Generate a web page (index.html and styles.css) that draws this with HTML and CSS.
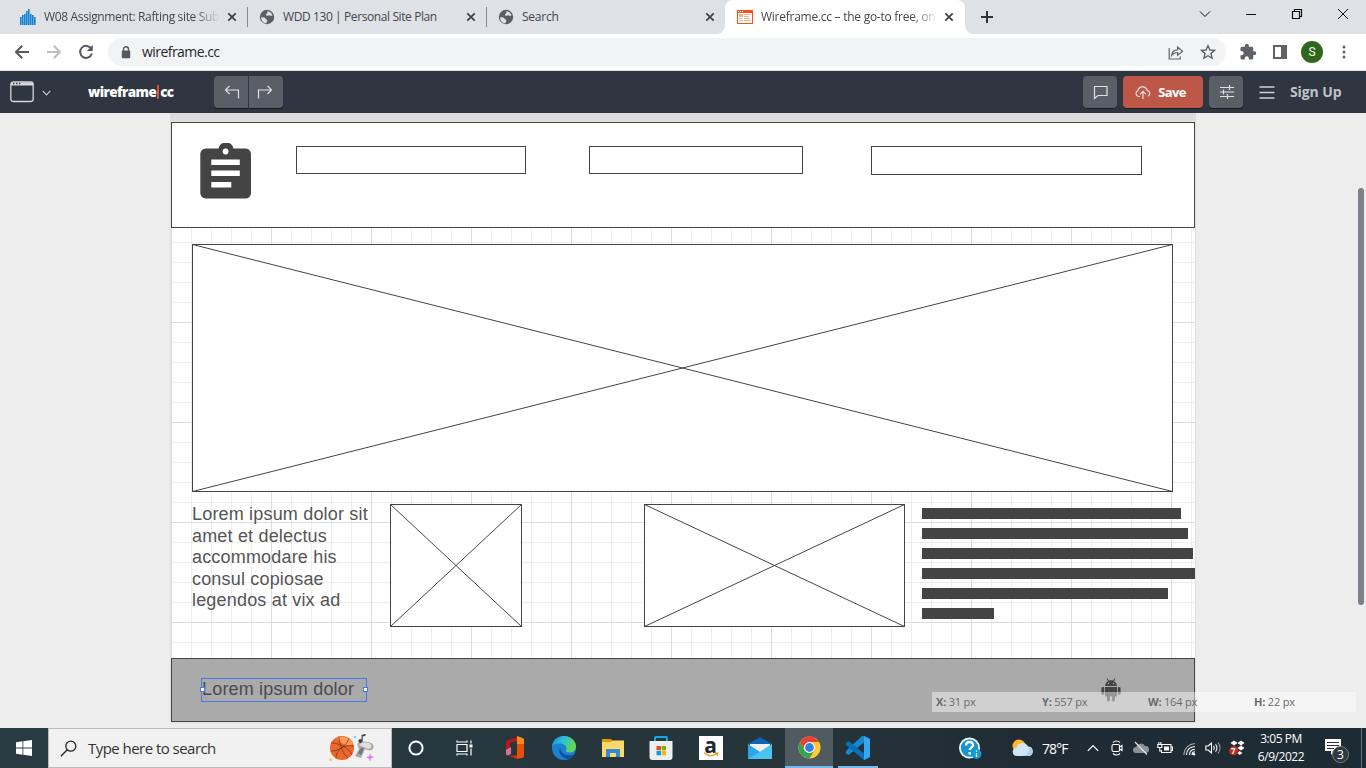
FILE: index.html
```html
<!DOCTYPE html>
<html lang="en">
<head>
<meta charset="utf-8">
<title>Wireframe.cc</title>
<link rel="stylesheet" href="styles.css">
</head>
<body>
<div class="screen">
  <header class="tabs">
    <div class="tab t1">
      <svg class="fav" width="16" height="16" viewBox="0 0 16 16" fill="#1581d2"><path d="M0 8h1.6v8H0zM2 6h1.6v10H2zM4 5h1.6v11H4zM6 2h1.6v14H6zM8 0h1.6v16H8zM10 5h1.6v11H10zM12 6h1.6v10H12zM14 8h1.6v8H14z"/></svg>
      <span class="label">W08 Assignment: Rafting site Sub</span>
      <svg class="x" width="10" height="10" viewBox="0 0 10 10"><path d="M1.3 1.3l7.4 7.4M8.7 1.3L1.3 8.7"/></svg>
    </div>
    <div class="tab t2">
      <svg class="fav" width="16" height="16" viewBox="0 0 16 16"><circle cx="8" cy="8" r="7.2" fill="#5a5f64"/><path d="M2.2 8.2c2 0 4 0 4.4 1.500.4 1 1.800.5 1.700 2-.1 1.100-1 1.500-.8 2.600C4 14 2 11.500 2.200 8.200zM8.500 2.200c2 0 4.400 1.700 5 4-.8.8-2 .7-3 .2-.8-.4-1.600.8-2.800.3-1.500-.7-.7-2 .3-2.300.7-.3 0-1.300.5-2.200z" fill="#dee1e6"/></svg>
      <span class="label">WDD 130 | Personal Site Plan</span>
      <svg class="x" width="10" height="10" viewBox="0 0 10 10"><path d="M1.3 1.3l7.4 7.4M8.7 1.3L1.3 8.7"/></svg>
    </div>
    <div class="tab t3">
      <svg class="fav" width="16" height="16" viewBox="0 0 16 16"><circle cx="8" cy="8" r="7.2" fill="#5a5f64"/><path d="M2.2 8.2c2 0 4 0 4.4 1.500.4 1 1.800.5 1.700 2-.1 1.100-1 1.500-.8 2.600C4 14 2 11.500 2.200 8.200zM8.500 2.200c2 0 4.400 1.700 5 4-.8.8-2 .7-3 .2-.8-.4-1.600.8-2.800.3-1.500-.7-.7-2 .3-2.300.7-.3 0-1.300.5-2.200z" fill="#dee1e6"/></svg>
      <span class="label">Search</span>
      <svg class="x" width="10" height="10" viewBox="0 0 10 10"><path d="M1.3 1.3l7.4 7.4M8.7 1.3L1.3 8.7"/></svg>
    </div>
    <div class="tab t4">
      <svg class="fav" width="16" height="14" viewBox="0 0 16 14"><path d="M0 0h16v14H0z" fill="#fc4f10"/><path d="M1 3h14v10H1z" fill="#fff"/><path d="M1 1h1v1H1zM3 1h1v1H3zM5 1h1v1H5z" fill="#fff"/><path d="M2 4h4v3H2zM7 4h7v1H7zM7 6h5v1H7zM2 8h3v1H2zM7 8h6v1H7zM2 10h4v1H2zM7 10h7v1H7z" fill="#ffae88"/></svg>
      <span class="label">Wireframe.cc – the go-to free, on</span>
      <svg class="x" width="10" height="10" viewBox="0 0 10 10"><path d="M1.300 1.300l7.400 7.400M8.700 1.300L1.300 8.700"/></svg>
    </div>
    <svg class="plus" width="12" height="12" viewBox="0 0 12 12"><path d="M6 0v12M0 6h12" stroke="#303236" stroke-width="2"/></svg>
    <div class="winbtns">
      <svg width="12" height="12" viewBox="0 0 12 12"><path d="M1 3.500l5 5 5-5"/></svg>
      <svg width="12" height="12" viewBox="0 0 12 12"><path d="M1 6.500h10"/></svg>
      <svg width="12" height="12" viewBox="0 0 12 12" stroke-width="1.200"><path d="M1.500 3.500h7v7h-7zM3.500 3.500v-2h7v7h-2"/></svg>
      <svg width="12" height="12" viewBox="0 0 12 12"><path d="M1 1l10 10M11 1L1 11"/></svg>
    </div>
  </header>

  <nav class="address">
    <svg class="nav" width="16" height="16" viewBox="0 0 16 16" stroke="#55595e"><path d="M15 8H2.500M8.200 1.800L2 8l6.200 6.200"/></svg>
    <svg class="nav" width="16" height="16" viewBox="0 0 16 16" stroke="#bcbec0"><path d="M1 8h12.500M7.800 1.800L14 8l-6.200 6.200"/></svg>
    <svg class="nav" width="16" height="16" viewBox="0 0 16 16" stroke="#55595e"><path d="M13.300 4.800A6 6 0 1 0 13.900 9.500"/><path d="M14.800 1v6H8.800z" fill="#55595e" stroke="none"/></svg>
    <div class="omni">
      <svg width="10" height="13" viewBox="0 0 10 13"><path d="M2.500 5V3.200a2.500 2.500 0 0 1 5 0V5" fill="none" stroke="#55595e" stroke-width="1.400"/><rect x=".8" y="4.600" width="8.400" height="7.600" rx=".8" fill="#55595e"/></svg>
      <span class="url">wireframe.cc</span>
      <svg class="share" width="16" height="15" viewBox="0 0 16 15" fill="none" stroke="#5f6368" stroke-width="1.200"><path d="M1.200 3v11h11V11.500M3.600 10.500c.4-4 3-5.700 6-5.700V2l5 4.200-5 4V7.500c-2.500 0-4.300.8-6 3z"/></svg>
      <svg width="16" height="16" viewBox="0 0 16 16" fill="none" stroke="#5f6368" stroke-width="1.400"><path d="M8 1.700l1.900 4.300 4.700.4-3.600 3.100 1.100 4.600L8 11.700l-4.100 2.400L5 9.500 1.400 6.400l4.700-.4z"/></svg>
    </div>
    <svg class="puzzle" width="18" height="18" viewBox="0 0 24 24" fill="#5f6368"><path d="M20.500 11H19V7c0-1.100-.9-2-2-2h-4V3.500a2.500 2.500 0 0 0-5 0V5H4c-1.100 0-2 .9-2 2v3.800h1.500a2.700 2.700 0 0 1 0 5.400H2V20c0 1.100.9 2 2 2h3.800v-1.500a2.700 2.700 0 0 1 5.400 0V22H17c1.100 0 2-.9 2-2v-4h1.500a2.500 2.500 0 0 0 0-5z"/></svg>
    <svg class="panel" width="14" height="14" viewBox="0 0 14 14"><path d="M1 1h12v12H1z" fill="none" stroke="#5f6368" stroke-width="2"/><path d="M8 0h6v14H8z" fill="#5f6368"/></svg>
    <span class="avatar">S</span>
    <svg class="dots" width="4" height="14" viewBox="0 0 4 14" fill="#5f6368"><circle cx="2" cy="2" r="1.500"/><circle cx="2" cy="7" r="1.500"/><circle cx="2" cy="12" r="1.500"/></svg>
  </nav>

  <div class="toolbar">
    <svg width="24" height="22" viewBox="0 0 24 22" fill="none" stroke="#d5d7da"><rect x=".8" y="1" width="22.400" height="19.500" rx="2.500" stroke-width="1.300"/><path d="M1 3h22" stroke-width="3"/><path d="M3 2.500h1.300M6 2.500h1.300M9 2.500h1.300" stroke="#2f3541" stroke-width="1.500"/></svg>
    <svg class="chev" width="9" height="6" viewBox="0 0 9 6"><path d="M.7.8l3.800 4L8.300.8" fill="none" stroke="#c5c8cc" stroke-width="1.200"/></svg>
    <div class="brand">wireframe<i></i>cc</div>
    <div class="undo">
      <span><svg width="16" height="14" viewBox="0 0 16 14"><path d="M5.500.8L1.500 5l4 4M1.500 5h13v8.500"/></svg></span>
      <span><svg width="16" height="14" viewBox="0 0 16 14"><path d="M10.500.8l4 4.200-4 4M14.500 5h-13v8.500"/></svg></span>
    </div>
    <button class="btn comment"><svg width="16" height="16" viewBox="0 0 16 16"><path d="M1.500 2.500h12.500v9H5l-3.500 3z"/></svg></button>
    <button class="btn save"><svg width="16" height="15" viewBox="0 0 16 15"><path d="M5 11.500H3.500A3 3 0 0 1 2.800 5.800a4.800 4.800 0 0 1 9.300-.5 3.200 3.200 0 0 1 1 6M8 14V6.500M5 9.300l3-3 3 3"/></svg><b>Save</b></button>
    <button class="btn tune"><svg width="16" height="16" viewBox="0 0 16 16"><path d="M1 3.500h14M1 8h14M1 12.500h14M10.500 1v5M4.500 5.500v5M8.500 10v5"/></svg></button>
    <svg class="menu" width="16" height="13" viewBox="0 0 16 13"><path d="M.5 1h15M.5 6.500h15M.5 12h15" stroke="#d0d2d5" stroke-width="1.400"/></svg>
    <b class="signup">Sign Up</b>
  </div>

  <main class="workspace">
    <div class="above"></div>
    <div class="page">
      <div class="shape head"></div>
      <svg class="clip" width="52" height="57" viewBox="0 0 52 57"><path d="M6 5.500h12.500a7.700 7.700 0 0 1 15 0H46a5.500 5.500 0 0 1 5 5.500V50a5.500 5.500 0 0 1-5.500 5.500h-40A5.500 5.500 0 0 1 .3 50V11A5.500 5.500 0 0 1 6 5.500z" fill="#444"/><circle cx="25.600" cy="8.500" r="2.900" fill="#fff"/><path d="M11.300 16.500h28.500v5.500H11.300zM11.300 27.500h28.500V33H11.300zM11.300 39h20v5.500h-20z" fill="#fff"/></svg>
      <div class="shape f1"></div><div class="shape f2"></div><div class="shape f3"></div>
      <svg class="pic hero" width="981" height="248"><rect x=".5" y=".5" width="980" height="247"/><path d="M.5.5l980 247M980.500.5l-980 247"/></svg>
      <p class="copy">Lorem ipsum dolor sit<br>amet et delectus<br>accommodare his<br>consul copiosae<br>legendos at vix ad</p>
      <svg class="pic small" width="132" height="123"><rect x=".5" y=".5" width="131" height="122"/><path d="M.5.5l131 122M131.500.5L.5 122.500"/></svg>
      <svg class="pic wide" width="261" height="123"><rect x=".5" y=".5" width="260" height="122"/><path d="M.5.5l260 122M260.500.5L.5 122.500"/></svg>
      <div class="lines"><i class="w1"></i><i class="w2"></i><i class="w3"></i><i class="w4"></i><i class="w5"></i><i class="w6"></i></div>
      <div class="shape foot"></div>
      <div class="selected">Lorem ipsum dolor</div>
      <svg class="android" width="20" height="24" viewBox="0 0 20 24" fill="#444"><path d="M4 8a6 6 0 0 1 3-5L5.600.8l.7-.5L7.900 2.600a6 6 0 0 1 4.200 0L13.700.3l.7.5L13 3a6 6 0 0 1 3 5z"/><path d="M4 9h12v9.500H4z"/><rect x=".4" y="9" width="2.800" height="8" rx="1.400"/><rect x="16.800" y="9" width="2.800" height="8" rx="1.400"/><rect x="6" y="16" width="3" height="7.500" rx="1.500"/><rect x="11" y="16" width="3" height="7.500" rx="1.500"/><circle cx="7.400" cy="5.500" r=".7" fill="#aaa"/><circle cx="12.600" cy="5.500" r=".7" fill="#aaa"/></svg>
    </div>
    <div class="coords"><span><b>X:</b> 31 px</span><span><b>Y:</b> 557 px</span><span><b>W:</b> 164 px</span><span><b>H:</b> 22 px</span></div>
    <div class="scroll"></div>
  </main>

  <footer class="taskbar">
    <div class="start"><svg width="16" height="16" viewBox="0 0 16 16" fill="#fff"><path d="M0 2.200l6.500-.9v6.300H0zM7.300 1.200L16 0v7.600H7.300zM0 8.400h6.500v6.300L0 13.800zM7.300 8.400H16V16l-8.700-1.200z"/></svg></div>
    <div class="search">
      <svg width="17" height="17" viewBox="0 0 17 17" fill="none" stroke="#222" stroke-width="1.300"><circle cx="10.800" cy="6.200" r="5"/><path d="M7.300 9.800L.8 16.300"/></svg>
      <span>Type here to search</span>
      <svg class="doodle" width="46" height="28" viewBox="0 0 46 28"><circle cx="13" cy="14" r="12" fill="#ed672b"/><path d="M8 4a12 12 0 0 1 16 6c-6 4-12-1-16-6z" fill="#ff9a55"/><path d="M2 9c9 0 18 5 21 12M10 2.500c0 8 4 17 9 21.500M1.500 17C9 18 18 11 20 4.500M7 24.500C7 16 14 10 24.500 12" fill="none" stroke="#6e2d20" stroke-width=".7"/><path d="M28 10c3-3 7-3 11-2 6 1 7 5 4 8-2 1-5 0-7-1l-4 9-6-2 4-7z" fill="#a8a8a8"/><path d="M30 11c2-3 6-3 10-2 4 2 3 5-1 6z" fill="#dedede"/><path d="M29 19l3 2 3-7-3 0z" fill="#777"/><path d="M32.500 7.500V1l4-1.200v2l-2.800.8v5z" fill="#3c4150"/><circle cx="31.300" cy="7" r="1.900" fill="#3c4150"/><circle cx="1.500" cy="25.500" r="1.500" fill="#f6ce63"/><circle cx="26" cy="3" r="1.200" fill="#6bd2ed"/><path d="M41 19l1 3 3 1-3 1.500-1 3-1-3-3-1 3-1z" fill="#e07be5"/></svg>
    </div>
    <div class="apps">
      <div class="n"><svg width="16" height="16" viewBox="0 0 16 16"><circle cx="8" cy="8" r="6.600" fill="none" stroke="#fff" stroke-width="2"/></svg></div>
      <div class="n"><svg width="17" height="16" viewBox="0 0 17 16" fill="none" stroke="#fff" stroke-width="1.200"><path d="M1 4.500h10v7H1zM1 .5V2h10V.5M1 15.500V14h10v1.500M15 .5v3M15 8.500v7"/><path d="M13.500 4.500h3v3h-3z" fill="#fff" stroke="none"/></svg></div>
      <div class="gap"></div>
      <div><svg width="20" height="24" viewBox="0 0 20 24"><path d="M12 1L2 4.500C1 5 1 6 1 7v10l4 3V7l7-2z" fill="#b51919"/><path d="M1 14l5-3v7l-4 1.500c-1-.5-1-1.500-1-2.500z" fill="#dc718f"/><path d="M12 0l6 2.300c.7.300 1 1 1 1.700v16c0 .8-.3 1.400-1 1.700L12 23z" fill="#e65000"/><path d="M12 0l6 2.300c.7.300 1 1 1 1.700v4h-7z" fill="#f68b16"/><path d="M4 20l8-1v4z" fill="#c82d18"/></svg></div>
      <div><svg width="24" height="24" viewBox="0 0 24 24"><defs><linearGradient id="eg" x1="0" x2="1" y1="0" y2=".3"><stop offset="0" stop-color="#2090df"/><stop offset=".5" stop-color="#2bbfd4"/><stop offset="1" stop-color="#65d851"/></linearGradient></defs><circle cx="12" cy="12" r="12" fill="#1782d2"/><path d="M0 10.500C.8 3.500 6 0 12 0c7.500 0 12 5.500 12 10.500 0 4-3.500 6-6.500 6-2.500 0-4-1-3.500-2 1-1.200 1-4-1.500-5.500C8 6.500 1.500 7.500 0 10.500z" fill="url(#eg)"/><path d="M8 12c-2 4 1 10 8 11.300 3-1 5.500-3 6.700-5.300-6 3-13 1-14.700-6z" fill="#104f9d"/></svg></div>
      <div><svg width="22" height="18" viewBox="0 0 22 18"><path d="M0 0h9l2 2v3H0z" fill="#df9b0b"/><path d="M0 3h9l2-1.500h11V18H0z" fill="#ffd869"/><path d="M4 10h14v8h-4v-4H8v4H4z" fill="#318bd6"/></svg></div>
      <div class="store"><svg width="24" height="24" viewBox="0 0 24 24"><path d="M6 6V2c0-.6.400-1 1-1h10c.6 0 1 .4 1 1v4" fill="none" stroke="#18a8e8" stroke-width="2"/><path d="M.5 5h23v16a3 3 0 0 1-3 3h-17a3 3 0 0 1-3-3z" fill="#eee"/><path fill="#e84b22" d="M7.500 10H12v4.300H7.500z"/><path fill="#71b600" d="M12.700 10H17v4.300h-4.300z"/><path fill="#00a2e9" d="M7.500 15H12v4.300H7.500z"/><path fill="#ffb400" d="M12.700 15H17v4.300h-4.300z"/></svg></div>
      <div class="amazon"><span>a</span><svg width="16" height="5" viewBox="0 0 16 5" fill="none" stroke="#ef9a20" stroke-width="1.300"><path d="M1 .8c4 3.500 9 3.700 13 .7M11.500.8h3.200L14 4"/></svg></div>
      <div><svg width="24" height="22" viewBox="0 0 24 22"><path d="M0 7l12-7 12 7v15H0z" fill="#1065b1"/><path d="M2 7h20v9H2z" fill="#f0f0f0"/><path d="M0 7l12 8L24 7v15H0z" fill="#2aa6e7"/><path d="M24 7v15H0l12-7z" fill="#4ac4f1"/></svg></div>
      <div class="active"><svg width="23" height="23" viewBox="0 0 24 24"><circle cx="12" cy="12" r="11.500" fill="#ffcb2e"/><path d="M12 .5A11.500 11.500 0 0 1 22 6.300H12a5.700 5.700 0 0 0-5 8.600L2 6.300A11.500 11.500 0 0 1 12 .5z" fill="#e94235"/><path d="M2 6.300l5 8.600a5.700 5.700 0 0 0 10 0l-5 8.600A11.500 11.500 0 0 1 2 6.300z" fill="#34a351"/><circle cx="12" cy="12" r="5.700" fill="#fff"/><circle cx="12" cy="12" r="4.600" fill="#327fe7"/></svg></div>
      <div class="open"><svg width="24" height="24" viewBox="0 0 24 24"><path d="M18 0l6 3v18l-6 3L8 14.500 2.500 19 0 17.500V15L16 0z" fill="#1389d5"/><path d="M0 7l2.500-2L18 17v7L0 9z" fill="#0872b8"/><path d="M18 6.500L11 12l7 5.500z" fill="#24313a"/><path d="M18 0l6 3v18l-6 3z" fill="#34a8f1"/></svg></div>
    </div>
    <div class="tray">
      <svg class="help" width="24" height="23" viewBox="0 0 24 23"><circle cx="11.500" cy="11" r="10.500" fill="#f3fafe"/><circle cx="11.500" cy="11" r="8.700" fill="#1594cf"/><path d="M8 8.500c0-4.500 7-4.500 7-.5 0 2.600-3.300 2.500-3.300 5M11.700 15v2.500" fill="none" stroke="#fff" stroke-width="2.400"/><circle cx="18.500" cy="17" r="5" fill="#159ad8"/><path d="M18.500 16v4M18.500 13.500v1.300" stroke="#fff" stroke-width="1.300"/></svg>
      <svg class="weather" width="22" height="18" viewBox="0 0 22 18"><circle cx="7" cy="7" r="6.500" fill="#fdb827"/><path d="M5 17a4.200 4.200 0 0 1-.3-8.400A6 6 0 0 1 16 7.500a4.800 4.800 0 0 1 1 9.500z" fill="#cfe6f9"/><path d="M9 17c5 0 8-3 8-8.500 5 1 4 8.500 0 8.500z" fill="#a3d1f5"/></svg>
      <span class="temp">78°F</span>
      <svg class="up" width="12" height="8" viewBox="0 0 12 8"><path d="M.8 6.800L6 1.500l5.200 5.300" fill="none" stroke="#fff" stroke-width="1.200"/></svg>
      <svg class="ti" width="16" height="16" viewBox="0 0 16 16"><rect x="3" y="4.500" width="7.500" height="7" rx="1.500"/><path d="M10.500 7l2.500-1.500v5L10.500 9M4 2.500c2-2 5-2 7 0M4 13.500c2 2 5 2 7 0"/></svg>
      <svg class="ti" width="16" height="16" viewBox="0 0 16 16"><path d="M3 13a3 3 0 0 1 0-6 5 5 0 0 1 9-1 3.500 3.500 0 0 1 1 7z" fill="#8b9194" stroke="none"/><path d="M2 2l12 12.500" stroke="#e8eaeb"/></svg>
      <svg class="ti" width="16" height="16" viewBox="0 0 16 16"><path d="M5 4.500h9v8H4.500V10M14 7h1.500v3.500H14M.8 4.500v3h4v-3zM1.800 4.500V2M3.800 4.500V2M2.800 8v3h1.700"/><path d="M7 6.500h5v4H7z" fill="#fff" stroke="none"/></svg>
      <svg class="ti wifi" width="16" height="16" viewBox="0 0 16 16"><path d="M3 15C3 8 8 4 14 3.500" stroke="#a4acaf"/><path d="M5.500 15c0-5 3.500-8.300 8.500-8.500M8.500 15c0-3.500 2-5.500 5.500-5.800M11 15c0-2 1-3 3-3.200"/><circle cx="13" cy="14.200" r="1.200" fill="#fff" stroke="none"/></svg>
      <svg class="ti snd" width="16" height="16" viewBox="0 0 16 16"><path d="M.8 6h2.400L6.500 3v10L3.200 10H.8zM8.500 6c1 1 1 3 0 4M10.500 4.300c2 2 2 5.400 0 7.400"/><path d="M12.800 2.500c3 3 3 8 0 11" stroke="#8d979c"/></svg>
      <div class="dropbox"><svg width="18" height="18" viewBox="0 0 18 18" fill="#fff"><path d="M1.500 4L5 1.500 8.500 4 5 6.500zM8.500 4L12 1.500 15.500 4 12 6.500zM8.500 9L12 6.500 15.500 9 12 11.500zM8.500 14l2-2 3 2-3 2z"/><circle cx="4.800" cy="11.800" r="4.700" fill="#c42b1c"/></svg><em>7</em></div>
      <div class="clock"><span>3:05 PM</span><span>6/9/2022</span></div>
      <div class="notes"><svg width="16" height="16" viewBox="0 0 16 16"><path d="M0 0h16v12h-6L6 16v-4H0z" fill="#fff"/><path d="M2 3.500h12M2 6.500h12M2 9.500h7" stroke="#25323b"/></svg><em>3</em></div>
      <div class="desk"></div>
    </div>
  </footer>
</div>
</body>
</html>
```
FILE: styles.css
```css
* { box-sizing: border-box; }
body { margin: 0; overflow: hidden; font-family: "Open Sans", "Noto Sans", sans-serif; }
svg { display: block; flex: none; }
.screen { width: 1366px; height: 768px; display: flex; flex-direction: column; background: #ededed; }

.tabs { height: 34px; flex: none; display: flex; background: #dee1e6; font-size: 12px; color: #44474b; }
.tab { height: 34px; display: flex; align-items: center; position: relative; white-space: nowrap; }
.tab .label { margin-left: 8px; flex: 1; min-width: 0; letter-spacing: -.4px; line-height: 20px; }
.t1 { width: 248px; padding: 0 11px 0 20px; }
.t1 .label { letter-spacing: -.35px; -webkit-mask-image: linear-gradient(90deg, #000 150px, transparent 176px); }
.t1 .x, .t4 .x { margin-left: 8px; }
.t2 { width: 239px; padding: 0 11px 0 11px; }
.t3 { width: 238px; padding: 0 10px 0 11px; }
.t3 .label { letter-spacing: -.25px; }
.t1::after, .t2::after { content: ""; position: absolute; right: 0; top: 7px; width: 1px; height: 20px; background: #85888d; }
.t4 { width: 240px; padding: 0 11px 0 12px; background: #fff; border-radius: 8px 8px 0 0; }
.t4 .label { letter-spacing: -.26px; -webkit-mask-image: linear-gradient(90deg, #000 150px, transparent 179px); }
.t4::before, .t4::after { content: ""; position: absolute; bottom: 0; width: 8px; height: 8px; }
.t4::before { left: -8px; background: radial-gradient(circle at 0 0, transparent 7.5px, #fff 8px); }
.t4::after { right: -8px; background: radial-gradient(circle at 100% 0, transparent 7.5px, #fff 8px); }
.x path { stroke: #3c4043; stroke-width: 1.7; }
.plus { margin: 11px 0 0 16px; }
.winbtns { margin: 8px 17px 0 auto; display: flex; gap: 34px; }
.winbtns path { fill: none; stroke: #111; }

.address { height: 37px; flex: none; background: #fff; border-bottom: 1px solid #dcdfe2; display: flex; align-items: center; padding-left: 14px; }
.nav { margin-right: 16px; fill: none; stroke-width: 2; }
.omni { width: 1118px; height: 28px; margin-left: -2px; border-radius: 14px; background: #f1f3f4; display: flex; align-items: center; padding: 0 10px 0 13px; }
.url { margin-left: 11px; font-size: 14px; letter-spacing: -.55px; line-height: 20px; color: #25282b; }
.share { margin: 0 16px 0 auto; }
.puzzle { margin-left: 13px; }
.panel { margin-left: 16px; }
.avatar { width: 22px; height: 22px; border-radius: 50%; margin-left: 14px; background: #2f681c; color: #fff; font: 12px/22px Roboto, sans-serif; text-align: center; }
.dots { margin-left: 19px; }

.toolbar { height: 42px; flex: none; background: #2f3541; display: flex; align-items: center; padding: 0 23px 0 10px; color: #fff; }
.chev { margin: 2px 0 0 8px; }
.brand { width: 126px; margin-left: 37px; display: flex; align-items: center; font-size: 13.5px; font-weight: 800; letter-spacing: -.6px; line-height: 18px; padding-bottom: 1px; }
.brand i { width: 2px; height: 14px; margin: 0 1px; background: #d9513f; }
.undo { display: flex; gap: 1px; }
.undo span, .btn { height: 32px; background: #5a5e67; display: flex; align-items: center; justify-content: center; box-shadow: 0 1px #171c20; }
.undo span { width: 34px; border-radius: 4px 0 0 4px; padding-left: 2px; }
.undo span + span { border-radius: 0 4px 4px 0; padding: 0 3px 0 0; }
.undo path, .btn path { fill: none; stroke: #e0e1e3; stroke-width: 1.2; }
.btn { width: 34px; padding: 0; border: 0; border-radius: 4px; color: #fff; font-family: inherit; }
.comment { margin-left: auto; padding-left: 1px; }
.tune { padding-left: 1px; }
.save { width: 80px; margin: 0 6px; padding-right: 5px; gap: 7px; background: #bd5848; font-size: 13px; }
.save b { letter-spacing: -.65px; }
.menu { margin-left: 16px; }
.signup { width: 53px; margin: -1px 0 0 15px; font-size: 14px; color: #c0c2c6; letter-spacing: -.1px; white-space: nowrap; }

.workspace { height: 615px; flex: none; position: relative; overflow: hidden; background: #ededed; }
.above { position: absolute; left: 170px; top: 0; width: 1026px; height: 9px; background: #dcdcdc; }
.page { position: absolute; left: 171px; top: 9px; width: 1024px; height: 600px; background-color: #fff; box-shadow: 0 0 1px 1px #e2e2e2;
  background-image: linear-gradient(90deg, #dedede 1px, transparent 1px), linear-gradient(#dedede 1px, transparent 1px), linear-gradient(90deg, #eee 1px, transparent 1px), linear-gradient(#eee 1px, transparent 1px);
  background-size: 100px 100px, 100px 100px, 20px 20px, 20px 20px; }
.page > * { position: absolute; }
.shape { border: 1px solid #444; background: #fff; }
.head { left: 0; top: 0; width: 1024px; height: 106px; }
.clip { left: 29px; top: 21px; }
.f1 { left: 125px; top: 24px; width: 230px; height: 28px; }
.f2 { left: 418px; top: 24px; width: 214px; height: 28px; }
.f3 { left: 700px; top: 24px; width: 271px; height: 29px; }
.pic { fill: #fff; stroke: #444; stroke-width: 1; }
.hero { left: 21px; top: 122px; }
.small { left: 219px; top: 382px; }
.wide { left: 473px; top: 382px; }
.copy { left: 21px; top: 382px; margin: 0; font: 18px/21.6px "Liberation Sans", Arial, sans-serif; color: #555; white-space: nowrap; letter-spacing: .18px; }
.lines { left: 751px; top: 386px; display: flex; flex-direction: column; gap: 9px; }
.lines i { height: 11px; background: #444; }
.w1 { width: 259px; } .w2 { width: 266px; } .w3 { width: 271px; } .w4 { width: 273px; } .w5 { width: 246px; } .w6 { width: 72px; }
.foot { left: 0; top: 536px; width: 1024px; height: 64px; background: #aaa; }
.selected { left: 30px; top: 556px; width: 166px; height: 24px; border: 1px solid #447be6; font: 18px/21px "Liberation Sans", Arial, sans-serif; letter-spacing: .18px; color: #4b4b4b; white-space: nowrap; }
.selected::before, .selected::after { content: ""; position: absolute; top: 8px; width: 5px; height: 5px; background: #fff; border: 1px solid #447be6; box-sizing: border-box; }
.selected::before { left: -2px; }
.selected::after { right: -2px; }
.android { left: 929.5px; top: 556px; }
.coords { position: absolute; left: 932px; top: 579px; width: 424px; height: 20px; display: grid; grid-template-columns: repeat(4, 106px); background: rgba(255,255,255,.45); font: 11px/20px "Open Sans", sans-serif; color: #6b6b6b; letter-spacing: -.2px; }
.coords span { padding-left: 4px; white-space: nowrap; }
.scroll { position: absolute; left: 1358px; top: 75px; width: 6px; height: 417px; border-radius: 3px; background: #7d8189; }

.taskbar { height: 40px; flex: none; display: flex; background: linear-gradient(90deg, #283b43, #26343a 60%, #202b34 75%, #1d2c34); color: #fff; }
.start { width: 48px; display: flex; align-items: center; justify-content: center; }
.search { width: 344px; display: flex; align-items: center; padding: 0 16px 0 11px; background: #f1f1f1; border: 1px solid #b9b9b9; color: #333; font-size: 15px; }
.search span { margin-left: 11px; letter-spacing: -.54px; white-space: nowrap; }
.doodle { margin-left: auto; }
.apps { display: flex; }
.apps > div { width: 49px; height: 40px; display: flex; align-items: center; justify-content: center; }
.apps > .n { width: 48px; }
.apps > .gap { width: 2px; }
.apps > .store { padding-right: 2px; }
.apps > .active { background: #505b61; border-bottom: 2px solid #76b9ed; width: 48px; margin-left: 1px; }
.apps > .open { background: linear-gradient(#76b9ed, #76b9ed) center bottom / 40px 2px no-repeat; }
.amazon span { width: 24px; height: 24px; background: #fff; color: #202733; font: bold 21px/18px "Open Sans", sans-serif; text-align: center; }
.amazon svg { margin: 13px 4px 0 -20px; }
.tray { flex: 1; display: flex; align-items: center; }
.help { margin-left: 76px; }
.weather { margin-left: 30px; }
.temp { width: 43px; margin-left: 8px; font-size: 14px; letter-spacing: -.9px; white-space: nowrap; }
.up { margin-left: 2px; }
.ti { margin-left: 10px; fill: none; stroke: #fff; stroke-width: 1.1; }
.ti + .ti { margin-left: 8px; }
.dropbox { position: relative; margin-left: 8px; }
.dropbox em { position: absolute; left: 2px; top: 6px; font: bold 8px/12px "Open Sans", sans-serif; }
.clock { width: 62px; margin-left: 3px; display: flex; flex-direction: column; text-align: center; font-size: 12px; line-height: 18px; letter-spacing: -.45px; }
.notes { position: relative; margin: 0 0 2px 13px; }
.notes em { position: absolute; left: 7px; top: 7px; width: 17px; height: 17px; border: 1px solid #777e83; border-radius: 50%; background: #30383e; text-align: center; font: 12px/15px "Open Sans", sans-serif; }
.desk { width: 1px; height: 40px; margin: 0 4px 0 auto; background: #66737a; }
```
